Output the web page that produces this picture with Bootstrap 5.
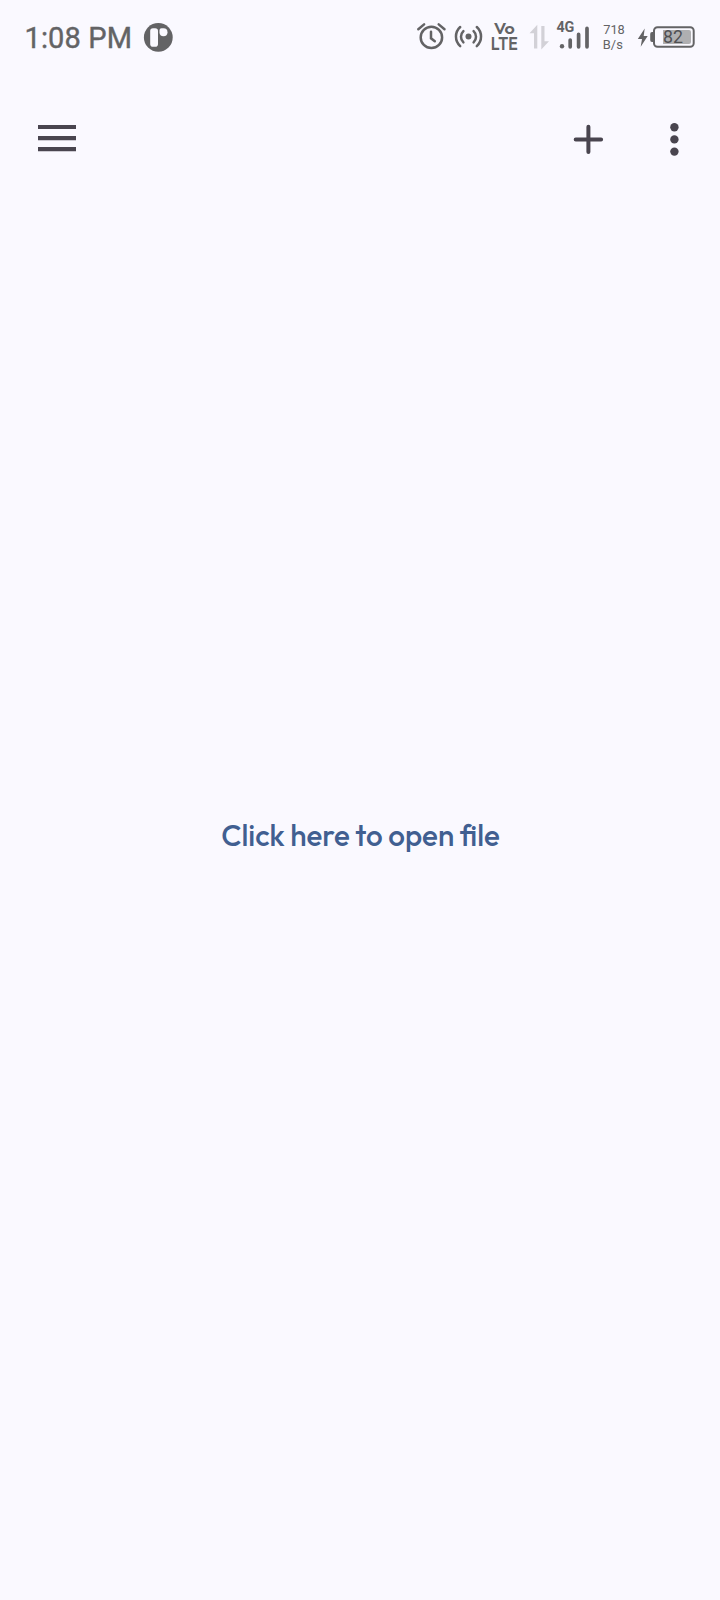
<!DOCTYPE html>
<html lang="en">
<head>
<meta charset="utf-8">
<meta name="viewport" content="width=device-width, initial-scale=1">
<title>Open file</title>
<link href="https://cdn.jsdelivr.net/npm/bootstrap@5.3.0/dist/css/bootstrap.min.css" rel="stylesheet">
<style>
body{background:#faf9ff;font-family:Roboto,sans-serif;color:#636365}
svg{display:block;overflow:visible}
.statusbar{height:75px;padding-left:24.5px}
.clock{font-size:29px;font-weight:400;-webkit-text-stroke:.4px #636365;line-height:34px;width:119.5px;letter-spacing:.15px;white-space:nowrap}
.toolbar{height:126px}
.tool{background:none;border:0;padding:0;color:#49454f}
.open-link{font-family:Outfit,Lato,sans-serif;font-size:29.6px;font-weight:500;word-spacing:-.4px;line-height:38px;color:#415f91;text-decoration:none;white-space:nowrap}
.stage{padding-bottom:131px;padding-left:1px}
</style>
</head>
<body class="vh-100 d-flex flex-column overflow-hidden">
<header class="statusbar d-flex align-items-center flex-shrink-0">
  <span class="clock">1:08 PM</span>
  <svg width="29" height="75" viewBox="144 0 29 75"><circle cx="158.3" cy="37.4" r="14.4" fill="#636365"/><rect x="150.2" y="28.3" width="7.8" height="18.4" rx="2.8" fill="#faf9ff"/><path d="M161.5 28.3h2a4 4 0 1 1-4 4v-2q0-2 2-2z" fill="#faf9ff"/></svg>
  <svg class="ms-auto" width="310" height="75" viewBox="410 0 310 75" fill="#636365">
    <g fill="none" stroke="#636365" stroke-width="2.5">
      <circle cx="431.4" cy="37.4" r="10.7"/>
      <path d="M431 31.8v6.5l3.8 3M418.3 29.2l5.8-4.8M444.5 29.2l-5.8-4.8" stroke-linecap="round"/>
      <path d="M463.4 31.2a7.7 7.7 0 0 0 0 11.2M473.6 31.2a7.7 7.7 0 0 1 0 11.2M460.2 27a13 13 0 0 0 0 19.2M476.8 27a13 13 0 0 1 0 19.2" stroke-linecap="round"/>
    </g>
    <circle cx="468.5" cy="36.6" r="3"/>
    <text x="493.8" y="33.8" font-family="Outfit, Lato, sans-serif" font-weight="600" font-size="16.5" textLength="21" lengthAdjust="spacingAndGlyphs">Vo</text>
    <text x="490.8" y="49.8" font-family="Outfit, Lato, sans-serif" font-weight="600" font-size="17" textLength="27" lengthAdjust="spacingAndGlyphs">LTE</text>
    <path d="M534 48.5V33.2h-4.5l7.8-8.4v23.7zM541.3 26h3.2v15.2h4.5l-7.7 8.3z" fill="#d2d1d7"/>
    <text x="556.4" y="32.2" font-weight="700" font-size="13.8" textLength="18" lengthAdjust="spacingAndGlyphs">4G</text>
    <circle cx="562" cy="46.2" r="2.2"/>
    <path d="M570.2 40v6.8M578.6 34.4v12.4M587 28.4v18.4" stroke="#636365" stroke-width="3.7" stroke-linecap="round"/>
    <text x="603.2" y="34.3" font-size="13" textLength="21.6" lengthAdjust="spacingAndGlyphs">718</text>
    <text x="602.8" y="49.2" font-size="13" textLength="20" lengthAdjust="spacingAndGlyphs">B/s</text>
    <path d="M644.7 28.5 637.8 39h4.2l-1.3 7.8 7-10.8h-4z"/>
    <path d="M653 32h-1q-1.8 0-1.8 2v6q0 2 1.8 2h1z"/>
    <rect x="654" y="27.3" width="39.7" height="19.4" rx="3.5" fill="none" stroke="#636365" stroke-width="2"/>
    <path d="M663 30h26q2 0 2 2v10q0 2-2 2H663z" fill="#afafb1"/>
    <text x="663" y="43.4" font-size="17.5" textLength="20" lengthAdjust="spacingAndGlyphs" fill="#505053">82</text>
  </svg>
</header>
<nav class="toolbar d-flex align-items-center justify-content-between flex-shrink-0" aria-label="Main">
  <button class="tool" aria-label="Menu"><svg width="100" height="126" viewBox="0 75 100 126" fill="currentColor"><path d="M38 125h38v4H38zM38 136h38v4.3H38zM38 147h38v4.3H38z"/></svg></button>
  <div class="d-flex">
    <button class="tool" aria-label="Add"><svg width="80" height="126" viewBox="560 75 80 126"><path d="M588.4 126.7v25.4M575.7 139.4h25.4" fill="none" stroke="currentColor" stroke-width="4" stroke-linecap="round"/></svg></button>
    <button class="tool" aria-label="More options"><svg width="80" height="126" viewBox="640 75 80 126" fill="currentColor"><circle cx="674.4" cy="127.2" r="4.2"/><circle cx="674.4" cy="139.4" r="4.2"/><circle cx="674.4" cy="151.6" r="4.2"/></svg></button>
  </div>
</nav>
<main class="stage flex-grow-1 d-flex align-items-center justify-content-center">
  <a class="open-link" href="#">Click here to open file</a>
</main>
<script src="https://cdn.jsdelivr.net/npm/bootstrap@5.3.0/dist/js/bootstrap.bundle.min.js"></script>
</body>
</html>
